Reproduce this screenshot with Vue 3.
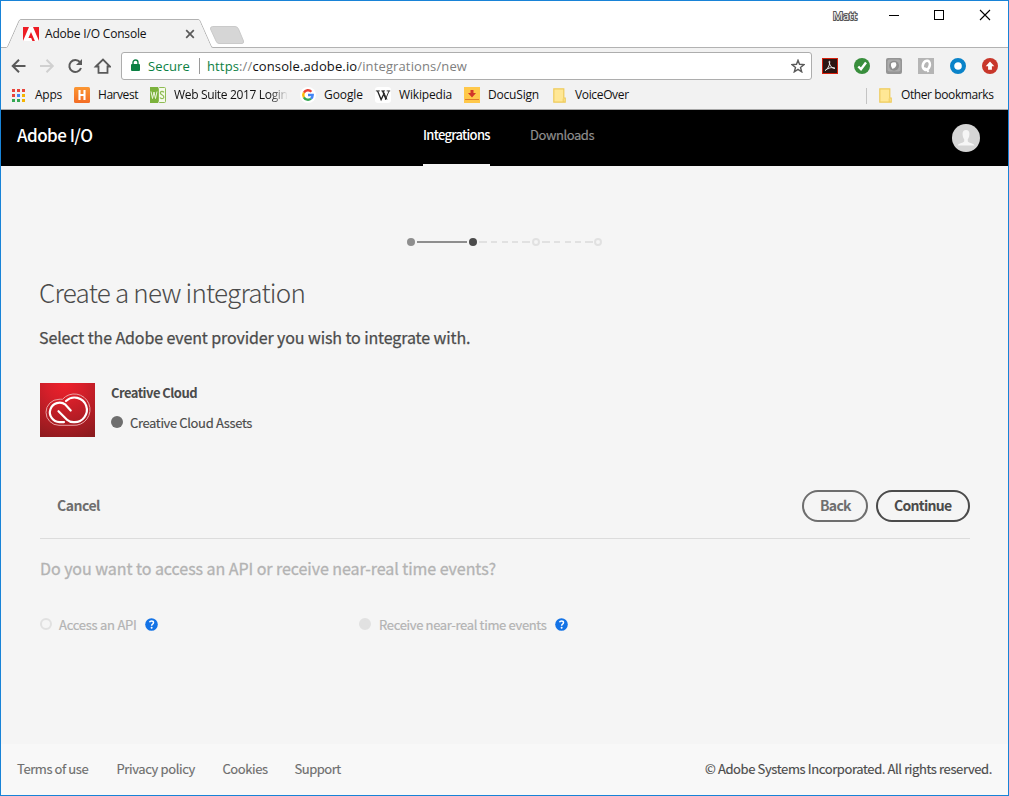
<script setup>
const footerLinks = [
  { label: 'Terms of use', cls: 'terms' },
  { label: 'Privacy policy', cls: 'privacy' },
  { label: 'Cookies', cls: 'cookies' },
  { label: 'Support', cls: 'support' }
]
</script>

<template>
  <div class="window">
    <div class="titlebar">
      <svg class="tabshape" width="260" height="47" viewBox="0 0 260 47">
        <path d="M0 46.5H5.5Q6.500 46.500 7 45L18 20Q18.700 18.500 20 18.500H197Q198.500 18.500 199 20L210 45Q210.700 46.500 212 46.500H260V47H0Z" fill="none" stroke="#b2b2b2" />
        <path d="M5 47Q6.500 46.500 7.500 45L18.400 20.400Q19 19 20.500 19H197Q198.200 19 198.800 20.400L209.600 45Q210.500 47 212 47Z" fill="#f2f2f2" />
        <path d="M211.500 25.500H234Q236.500 25.500 237.500 28L242.500 40Q243 42.500 241 42.500H218Q216 42.500 215 40L209.500 28Q209 26 211.500 25.500Z" fill="#d6d6d6" stroke="#cacaca" />
      </svg>
      <div class="tab">
        <svg width="16" height="16" viewBox="0 0 16 16">
          <rect y="1" width="16" height="14" fill="#fff" />
          <path d="M8 6L11.900 15H9.400L8.200 12H5.400Z" fill="#ed1c24" />
          <path d="M0 1H6L0 15ZM10 1H16V15Z" fill="#ed1c24" />
        </svg>
        <span class="tab-title">Adobe I/O Console</span>
        <svg class="tab-x" width="10" height="10" viewBox="0 0 10 10"><path d="M1.200 1.200L8.800 8.800M8.800 1.200L1.200 8.800" stroke="#5a5a5a" stroke-width="1.700" /></svg>
      </div>
      <div class="wincontrols">
        <span class="user">Matt</span>
        <svg width="112" height="12" viewBox="0 0 112 12" fill="none" stroke="#000">
          <path d="M0 6.500H10" />
          <rect x="45.500" y="1.500" width="9" height="9" />
          <path d="M91 1L101 11M101 1L91 11" stroke-width="1.100" />
        </svg>
      </div>
    </div>

    <div class="toolbar">
      <svg class="nav" width="100" height="20" viewBox="0 0 100 20" fill="none" stroke="#5a5a5a" stroke-width="2">
        <path d="M14.500 10H2M8 3.700L1.700 10L8 16.300" />
        <path d="M29 10H41.500M35.500 3.700L41.800 10L35.500 16.300" stroke="#d0d0d0" />
        <path d="M69 6.200A6 6 0 1 0 70 12" />
        <path d="M71 3V9H65Z" fill="#5a5a5a" stroke="none" />
        <path d="M84.800 10.500L92 3.500L99 10.500H96.500V16.800H87.500V10.500Z" stroke-width="1.800" />
      </svg>
      <div class="omnibox">
        <svg class="lock" width="9" height="12" viewBox="0 0 9 12"><rect y="5" width="9" height="7" rx="1" fill="#0b8043" /><path d="M2 6V3.500A2.500 2.500 0 0 1 7 3.500V6" fill="none" stroke="#0b8043" stroke-width="1.400" /></svg>
        <span class="secure">Secure</span>
        <i class="sep"></i>
        <span class="url"><em>https</em><s>://</s>console.adobe.io<s>/integrations/new</s></span>
        <svg class="star" width="14" height="14" viewBox="0 0 14 14"><path d="M7 1.300L8.500 5.300L13 5.600L9.500 8.400L10.700 12.800L7 10.300L3.300 12.800L4.500 8.400L1 5.600L5.500 5.300Z" fill="none" stroke="#5a5a5a" stroke-width="1.400" /></svg>
      </div>
      <div class="extensions">
        <svg width="16" height="16" viewBox="0 0 16 16"><rect x=".5" y=".5" width="15" height="15" fill="#2c1512" stroke="#d61f0c" /><path d="M3 12.500C5.500 11.500 8 7 7.700 3.500C7.600 2.500 6.900 3.200 7.200 4.500C8 8 10 10.500 13 10.300C10.500 9 6.500 9.500 3.500 12.300" fill="none" stroke="#eee" /></svg>
        <svg width="16" height="16" viewBox="0 0 16 16"><circle cx="8" cy="8" r="8" fill="#388e3c" /><path d="M4.300 8.500L7 11.200L12 4.500" fill="none" stroke="#fff" stroke-width="2.400" /></svg>
        <svg width="16" height="16" viewBox="0 0 16 16"><rect width="16" height="16" rx="2" fill="#959595" /><rect x="1.500" y="1.500" width="13" height="12" rx="2" fill="#acacac" /><circle cx="8" cy="7.800" r="5" fill="#8f8f8f" /><path d="M5 5.500Q7 3.800 9.800 4.600Q11 6.500 9.500 9Q8 11 6.300 10.800Q4.300 8.500 5 5.500Z" fill="#fff" /></svg>
        <svg width="16" height="16" viewBox="0 0 16 16"><rect width="16" height="16" fill="#b5b5b5" /><ellipse cx="8.300" cy="7.300" rx="3.400" ry="4.700" transform="rotate(18 8.300 7.300)" fill="none" stroke="#fff" stroke-width="2.600" /><path d="M5 10.500Q8 9.500 10.500 14" fill="none" stroke="#fff" stroke-width="1.900" /></svg>
        <svg width="16" height="16" viewBox="0 0 16 16"><circle cx="8" cy="8" r="5.900" fill="#fff" stroke="#0a83c9" stroke-width="4.200" /></svg>
        <svg width="16" height="16" viewBox="0 0 16 16"><circle cx="8" cy="8" r="8" fill="#c8372b" /><path d="M8 3.500L12.300 8.300H9.900V11.700H6.100V8.300H3.700Z" fill="#fff" /></svg>
      </div>
    </div>

    <div class="bookmarks">
      <svg class="b-apps" width="13" height="13" viewBox="0 0 13 13">
        <path d="M0 0h3v3H0zM5 0h3v3H5zM10 0h3v3h-3zM0 5h3v3H0z" fill="#e8453c" />
        <path d="M5 5h3v3H5z" fill="#4285f4" /><path d="M10 5h3v3h-3zM10 10h3v3h-3z" fill="#f4b400" /><path d="M0 10h3v3H0zM5 10h3v3H5z" fill="#34a853" />
      </svg>
      <span class="t-apps">Apps</span>
      <svg width="16" height="16" viewBox="0 0 16 16"><defs><linearGradient id="hv" x2="0" y2="1"><stop stop-color="#fb9733" /><stop offset="1" stop-color="#f36c24" /></linearGradient></defs><rect width="16" height="16" rx="1.500" fill="url(#hv)" /><path d="M5.500 3V13M10.500 3V13M5 8H11" stroke="#fff" stroke-width="2.100" /></svg>
      <span class="t-harvest">Harvest</span>
      <svg width="16" height="16" viewBox="0 0 16 16"><rect width="8" height="16" fill="#7cb23c" /><rect x="8.500" y=".5" width="7" height="15" rx="1" fill="#f4f9ea" stroke="#8fbc55" /><path d="M1 4.500L2.500 11.500L4 5L5.500 11.500L7 4.500" fill="none" stroke="#eef6df" /><path d="M14 5.300Q13.300 4.300 12 4.300Q10.200 4.500 10.400 6.200Q10.800 7.500 12.300 8Q14 8.700 13.800 10.300Q13.500 11.600 12 11.600Q10.500 11.600 10 10.600" fill="none" stroke="#8fbc55" stroke-width="1.200" /></svg>
      <span class="t-web">Web Suite 2017 Login</span>
      <svg width="16" height="16" viewBox="0 0 16 16" fill="none" stroke-width="2.400"><circle cx="8" cy="8" r="8" fill="#fff" /><path d="M3.900 5.600A4.700 4.700 0 0 1 11.400 4.700" stroke="#ea4335" /><path d="M3.900 5.600A4.900 4.900 0 0 0 3.900 10.400" stroke="#fbbc05" /><path d="M3.900 10.400A4.700 4.700 0 0 0 11 11.600" stroke="#34a853" /><path d="M11 11.600A4.700 4.700 0 0 0 12.700 8H8" stroke="#4285f4" /></svg>
      <span class="t-google">Google</span>
      <svg width="16" height="16" viewBox="0 0 16 16"><rect width="16" height="16" rx="3" fill="#fff" /><path d="M.8 3.900H4.800M6.300 3.900H10M11.700 3.900H15.200M8.100 3.900L12 12.500M14 4L10.300 12.800" stroke="#222" fill="none" stroke-width=".9" /><path d="M2.600 4L6.100 12.600L9.300 6M7.600 4L11 12.500" stroke="#222" fill="none" stroke-width="1.300" /></svg>
      <span class="t-wiki">Wikipedia</span>
      <svg width="16" height="16" viewBox="0 0 16 16"><rect width="16" height="16" fill="#ffc84a" /><path d="M6.500 3H9.500V6H12L8 10.500L4 6H6.500Z" fill="#d1342a" /><path d="M1 12.500H15" stroke="#e07b2c" /></svg>
      <span class="t-docu">DocuSign</span>
      <svg width="13" height="15" viewBox="0 0 13 15"><path d="M.8 .8H10.800V10H12.200V14.200H.8Z" fill="#ffe795" stroke="#eecb5c" stroke-width="1.200" /><path d="M10.200 14V10.500" stroke="#eecb5c" /></svg>
      <span class="t-voice">VoiceOver</span>
      <i class="bsep"></i>
      <svg width="13" height="15" viewBox="0 0 13 15"><path d="M.8 .8H10.800V10H12.200V14.200H.8Z" fill="#ffe795" stroke="#eecb5c" stroke-width="1.200" /><path d="M10.200 14V10.500" stroke="#eecb5c" /></svg>
      <span class="t-other">Other bookmarks</span>
    </div>

    <header class="appbar">
      <span class="brand">Adobe I/O</span>
      <nav>
        <a class="nav-int">Integrations</a>
        <a class="nav-down">Downloads</a>
      </nav>
      <svg class="avatar" width="28" height="28" viewBox="0 0 28 28"><circle cx="14" cy="14" r="14" fill="#d5d5d5" /><path d="M14 6C11.500 6 10.300 8 10.600 10.500C10.800 13 11.500 14.500 12.200 15.300V17.500Q11.500 18.600 8.500 19.300Q6 20 5.500 21.500H22.500Q22 20 19.500 19.300Q16.500 18.600 15.800 17.500V15.300C16.500 14.500 17.200 13 17.400 10.500C17.700 8 16.500 6 14 6Z" fill="#f6f6f6" /></svg>
    </header>

    <main>
      <svg class="stepper" width="200" height="20" viewBox="0 0 200 20">
        <circle cx="7" cy="10" r="4" fill="#8e8e8e" />
        <path d="M13 10H63" stroke="#8e8e8e" stroke-width="2" />
        <circle cx="69" cy="10" r="4" fill="#4b4b4b" />
        <path d="M75 10H83M87 10H93M98 10H104M108 10H114M118 10H126M138 10H146M150 10H156M161 10H167M171 10H177M181 10H189" stroke="#e1e1e1" stroke-width="2" />
        <circle cx="132" cy="10" r="3" fill="#f5f5f5" stroke="#e1e1e1" stroke-width="2" />
        <circle cx="194" cy="10" r="3" fill="#f5f5f5" stroke="#e1e1e1" stroke-width="2" />
      </svg>
      <h1>Create a new integration</h1>
      <h2>Select the Adobe event provider you wish to integrate with.</h2>

      <section class="provider">
        <svg width="55" height="54" viewBox="0 0 55 54">
          <defs><radialGradient id="cc" cx=".45" cy="0" r="1.150"><stop stop-color="#ee202b" /><stop offset=".3" stop-color="#d61f2a" /><stop offset="1" stop-color="#861a1d" /></radialGradient></defs>
          <rect width="55" height="54" fill="url(#cc)" />
          <path d="M19 42.300A13 13 0 0 1 19 16.300Q21 16.100 22.500 16.300A15.700 15.700 0 1 1 33 42.300Z" fill="none" stroke="#e9a3a5" />
          <g fill="none" stroke="#fff" stroke-width="2.200" stroke-linecap="round">
            <path d="M24 39.100H19.500A9.700 9.700 0 1 1 25.500 21.700L30.700 27.500" />
            <path d="M26 18A12.300 12.300 0 1 1 33.500 39.100Q29.500 39.100 27 36.700L18.500 28.200" />
          </g>
        </svg>
        <div class="pinfo">
          <strong>Creative Cloud</strong>
          <div class="asset"><i></i><span>Creative Cloud Assets</span></div>
        </div>
      </section>

      <div class="actions">
        <span class="cancel">Cancel</span>
        <button class="back"><span>Back</span></button>
        <button class="continue"><span>Continue</span></button>
      </div>
      <div class="rule"></div>

      <h3>Do you want to access an API or receive near-real time events?</h3>
      <div class="choices">
        <div class="choice c1">
          <i class="radio"></i><span>Access an API</span>
          <svg width="13" height="13" viewBox="0 0 13 13"><circle cx="6.500" cy="6.500" r="6.300" fill="#1473e6" /><path d="M4.500 4.200Q5 3 6.500 3Q8.500 3 8.500 4.600Q8.500 5.500 7.500 6.100Q6.600 6.600 6.600 7.700" fill="none" stroke="#fff" stroke-width="1.500" /><circle cx="6.600" cy="9.700" r="1" fill="#fff" /></svg>
        </div>
        <div class="choice c2">
          <i class="radio on"></i><span>Receive near-real time events</span>
          <svg width="13" height="13" viewBox="0 0 13 13"><circle cx="6.500" cy="6.500" r="6.300" fill="#1473e6" /><path d="M4.500 4.200Q5 3 6.500 3Q8.500 3 8.500 4.600Q8.500 5.500 7.500 6.100Q6.600 6.600 6.600 7.700" fill="none" stroke="#fff" stroke-width="1.500" /><circle cx="6.600" cy="9.700" r="1" fill="#fff" /></svg>
        </div>
      </div>
    </main>

    <footer>
      <a v-for="l in footerLinks" :key="l.label" :class="l.cls">{{ l.label }}</a>
      <span class="copy">© Adobe Systems Incorporated. All rights reserved.</span>
    </footer>
  </div>
</template>

<style>
body { background: #f5f5f5; }
</style>

<style scoped>
.window {
  box-sizing: border-box; width: 1009px; height: 796px; border: 1px solid #1883d7;
  display: flex; flex-direction: column; overflow: hidden; background: #f5f5f5;
  font-family: "Noto Sans CJK JP", "Noto Sans", sans-serif; color: #4b4b4b;
}
svg { display: block; flex: none; }
span, a, strong, h1, h2, h3 { white-space: nowrap; }
.titlebar, .toolbar, .bookmarks { font-family: "Open Sans", sans-serif; font-size: 12px; color: #111; box-sizing: border-box; flex: none; }

.titlebar { position: relative; height: 47px; background: #fff; border-bottom: 1px solid #b2b2b2; display: flex; justify-content: space-between; }
.tabshape { position: absolute; left: 0; top: 0; }
.tab { position: relative; display: flex; align-items: center; height: 30px; margin: 18px 0 0 22px; }
.tab-title { width: 140px; margin-left: 6px; line-height: 20px; letter-spacing: -.18px; }
.wincontrols { display: flex; align-items: flex-start; padding-top: 5px; }
.user { width: 25px; margin-right: 31px; line-height: 20px; font-size: 11px; color: #fff; -webkit-text-stroke: 2px #555; paint-order: stroke fill; }
.wincontrols svg { margin: 3px 7px 0 0; }

.toolbar { height: 34px; background: #f2f2f2; display: flex; align-items: center; padding: 1px 0 0 10px; }
.nav { margin-right: 10px; }
.omnibox { box-sizing: border-box; width: 691px; height: 28px; border: 1px solid #adadad; border-radius: 3px; background: #fff; display: flex; align-items: center; padding: 0 6px 0 9px; font-size: 13px; line-height: 20px; }
.secure { color: #0b8043; margin-left: 8px; width: 51px; letter-spacing: .1px; }
.lock { margin-top: -2px; }
.sep { width: 1px; height: 16px; background: #9a9a9a; }
.url { margin-left: 7px; flex: 1; letter-spacing: .13px; }
.url em { font-style: normal; color: #0b8043; }
.url s { text-decoration: none; color: #808080; }
.extensions { display: flex; gap: 16px; margin-left: 10px; }

.bookmarks { height: 28px; background: #f2f2f2; border-bottom: 1px solid #a8a8a8; display: flex; align-items: center; padding-left: 11px; line-height: 20px; }
.bookmarks span { margin-top: -1px; }
.bookmarks svg { margin-top: -1px; }
.b-apps { margin-right: 10px; }
.t-apps { width: 39px; letter-spacing: -.25px; }
.bookmarks .t-harvest { margin-left: 8px; width: 52px; letter-spacing: -.45px; }
.bookmarks .t-web { margin-left: 8px; width: 114px; margin-right: 12px; letter-spacing: -.34px; -webkit-mask-image: linear-gradient(90deg, #000 84%, transparent); mask-image: linear-gradient(90deg, #000 84%, transparent); }
.t-google { margin-left: 8px; width: 51px; letter-spacing: -.08px; }
.t-wiki { margin-left: 8px; width: 65px; letter-spacing: -.17px; }
.t-docu { margin-left: 8px; width: 65px; letter-spacing: -.19px; }
.t-voice { margin-left: 9px; letter-spacing: -.35px; }
.bsep { width: 1px; height: 16px; background: #c4c4c4; margin: 0 12px 0 auto; }
.bookmarks .t-other { margin: -1px 13px 0 9px; width: 94px; letter-spacing: -.4px; }

.appbar { flex: none; height: 56px; background: #000; display: flex; align-items: flex-start; color: #fff; }
.brand { margin: 13px 0 0 16px; width: 406px; font-size: 17px; line-height: 24px; font-weight: 500; letter-spacing: -.54px; }
nav { display: flex; gap: 40px; font-size: 13px; line-height: 20px; }
nav a { box-sizing: border-box; height: 56px; padding-top: 15px; }
.nav-int { width: 67px; font-weight: 500; letter-spacing: -.7px; border-bottom: 2px solid #f5f5f5; }
.nav-down { color: #8e8e8e; letter-spacing: -.42px; -webkit-text-stroke: .2px; }
.avatar { margin: 14px 28px 0 auto; }

main { flex: 1; padding: 66px 38px 0 39px; display: flex; flex-direction: column; }
.stepper { margin-left: 364px; }
h1 { margin: 20px 0 0 -1px; font-size: 26px; line-height: 40px; font-weight: 300; letter-spacing: -.777px; }
h2 { margin: 13px 0 0 -1px; font-size: 16px; line-height: 24px; font-weight: 400; letter-spacing: -.11px; -webkit-text-stroke: .25px; }
.provider { display: flex; margin-top: 33px; height: 60px; }
.provider > svg { margin-top: 1px; }
.pinfo { margin: 1px 0 0 16px; display: flex; flex-direction: column; gap: 10px; font-size: 13px; line-height: 20px; }
.pinfo strong { font-weight: 700; letter-spacing: -.54px; }
.asset { display: flex; align-items: center; letter-spacing: -.365px; -webkit-text-stroke: .15px; }
.asset i { width: 12px; height: 12px; border-radius: 50%; background: #6e6e6e; margin: -2px 7px 0 0; }
.actions { display: flex; margin-top: 48px; height: 32px; font-size: 14px; font-weight: 700; line-height: 20px; }
.cancel { margin: 5px auto 0 17px; color: #6e6e6e; letter-spacing: -.49px; }
button { box-sizing: border-box; height: 32px; border-radius: 16px; border: 2px solid; background: transparent; font: inherit; padding: 0 0 2px 16px; text-align: left; }
.back { width: 66px; color: #6e6e6e; letter-spacing: -.7px; margin-right: 8px; }
.continue { width: 94px; color: #4b4b4b; letter-spacing: -.7px; }
.rule { margin-top: 16px; height: 1px; background: #dcdcdc; flex: none; }
h3 { margin: 17px 0 0; font-size: 16px; line-height: 24px; font-weight: 400; letter-spacing: -.05px; color: #b3b3b3; -webkit-text-stroke: .3px; }
.choices { display: flex; margin-top: 34px; font-size: 13px; line-height: 20px; color: #b3b3b3; -webkit-text-stroke: .2px; }
.choice { display: flex; align-items: center; }
.choice span { padding-top: 1px; }
.choice svg { margin: -1px 0 0 8px; }
.c1 { width: 319px; letter-spacing: -.26px; }
.c2 { letter-spacing: -.33px; }
.radio { box-sizing: border-box; width: 12px; height: 12px; border-radius: 50%; border: 2px solid #e1e1e1; margin: -1px 7px 0 0; }
.c2 .radio { margin-right: 8px; }
.on { background: #e1e1e1; }

footer { box-sizing: border-box; flex: none; height: 51px; background: #f8f8f8; display: flex; align-items: center; padding: 0 16px 2px; font-size: 13px; line-height: 20px; color: #6e6e6e; -webkit-text-stroke: .15px; }
.terms { width: 99.500px; letter-spacing: -.42px; }
.privacy { width: 106px; letter-spacing: -.38px; }
.cookies { width: 72px; letter-spacing: -.42px; }
.support { letter-spacing: -.48px; }
.copy { margin-left: auto; color: #4b4b4b; letter-spacing: -.388px; }
</style>
